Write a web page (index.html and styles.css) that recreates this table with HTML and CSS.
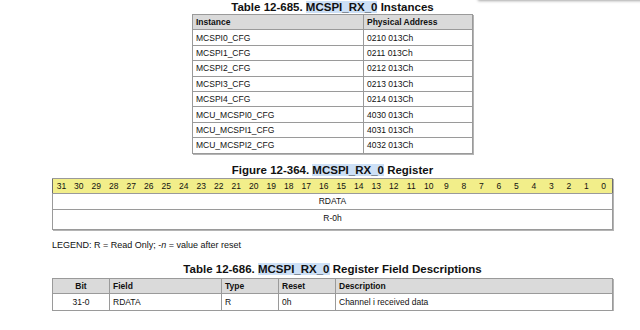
FILE: index.html
```html
<!DOCTYPE html>
<html>
<head>
    <meta charset="UTF-8" />
    <meta name="viewport" content="width=device-width, initial-scale=1.0" />
    <title>MCSPI_RX_0</title>
    <link rel="stylesheet" href="styles.css">
</head>
<body>
    <div class="panel-shadow"></div>
    <div id="page">
        <h4 class="caption">Table 12-685. <span class="hit">MCSPI_RX_0</span> Instances</h4>
        <table class="grid instances">
            <tr><th class="col-inst">Instance</th><th>Physical Address</th></tr>
            <tr><td>MCSPI0_CFG</td><td>0210 013Ch</td></tr>
            <tr><td>MCSPI1_CFG</td><td>0211 013Ch</td></tr>
            <tr><td>MCSPI2_CFG</td><td>0212 013Ch</td></tr>
            <tr><td>MCSPI3_CFG</td><td>0213 013Ch</td></tr>
            <tr><td>MCSPI4_CFG</td><td>0214 013Ch</td></tr>
            <tr><td>MCU_MCSPI0_CFG</td><td>4030 013Ch</td></tr>
            <tr><td>MCU_MCSPI1_CFG</td><td>4031 013Ch</td></tr>
            <tr><td>MCU_MCSPI2_CFG</td><td>4032 013Ch</td></tr>
        </table>

        <h4 class="caption fig">Figure 12-364. <span class="hit">MCSPI_RX_0</span> Register</h4>
        <table class="grid register">
            <tr class="bits">
                <td>31</td><td>30</td><td>29</td><td>28</td><td>27</td><td>26</td><td>25</td><td>24</td>
                <td>23</td><td>22</td><td>21</td><td>20</td><td>19</td><td>18</td><td>17</td><td>16</td>
                <td>15</td><td>14</td><td>13</td><td>12</td><td>11</td><td>10</td><td>9</td><td>8</td>
                <td>7</td><td>6</td><td>5</td><td>4</td><td>3</td><td>2</td><td>1</td><td>0</td>
            </tr>
            <tr class="field"><td colspan="32">RDATA</td></tr>
            <tr class="access"><td colspan="32">R-0h</td></tr>
        </table>

        <p class="legend">LEGEND: R = Read Only; -<i>n</i> = value after reset</p>

        <h4 class="caption desc">Table 12-686. <span class="hit">MCSPI_RX_0</span> Register Field Descriptions</h4>
        <table class="grid fields">
            <tr><th class="c-bit center">Bit</th><th class="c-field">Field</th><th class="c-type">Type</th><th class="c-reset">Reset</th><th>Description</th></tr>
            <tr><td class="center">31-0</td><td>RDATA</td><td>R</td><td>0h</td><td>Channel i received data</td></tr>
        </table>
    </div>
</body>
</html>
```

FILE: styles.css
```css
body {
    margin: 0;
    background: #fff;
    font-family: "Liberation Sans", Arial, sans-serif;
    color: #111;
    overflow: hidden;
}

/* faint edge of a floating panel at the top right */
.panel-shadow {
    position: absolute;
    top: -10px;
    left: 478px;
    width: 170px;
    height: 10px;
    background: #fff;
    box-shadow: 0 1px 3px rgba(0, 0, 0, 0.35);
}

#page {
    width: 561px;
    margin-left: 52px;
    display: flex;
    flex-direction: column;
    align-items: center;
}

.caption {
    margin: 1px 0 0;
    font-size: 11.5px;
    line-height: 13px;
    font-weight: bold;
    text-align: center;
}
.caption.fig { margin-top: 10px; }
.caption.desc { margin-top: 13px; align-self: center; }

.hit { background: #cde0f6; }

.grid {
    border-collapse: collapse;
    font-size: 8.5px;
    border: 1px solid #6e6e6e;
    box-shadow: 1px 1px 0 #b4b4b4;
}
.grid td, .grid th {
    border: 1px solid #9a9a9a;
    padding: 0 3px;
    text-align: left;
    white-space: nowrap;
}
.grid th {
    background: #dadada;
    font-weight: bold;
}

/* instances */
.instances { width: 281px; }
.instances tr { height: 15.4px; }
.instances .col-inst { width: 164px; }

/* register bit layout */
.register {
    width: 561px;
    margin-top: 1px;
    table-layout: fixed;
}
.register td { text-align: center; padding: 0; }
.register .bits { height: 15px; }
.register .bits td {
    background: #f2ee8a;
    border-left: none;
    border-right: none;
}
.register .field { height: 16px; }
.register .access { height: 20px; }
.register .access td { vertical-align: top; padding-top: 3px; }

.legend {
    align-self: flex-start;
    margin: 10px 0 0;
    font-size: 9px;
}

/* field descriptions */
.fields { width: 561px; margin-top: 2px; }
.fields tr { height: 15.5px; }
.fields tr + tr { height: 17px; }
.fields .c-bit { width: 50px; }
.fields .c-field { width: 105px; }
.fields .c-type { width: 50px; }
.fields .c-reset { width: 50px; }
.center { text-align: center !important; }
```
